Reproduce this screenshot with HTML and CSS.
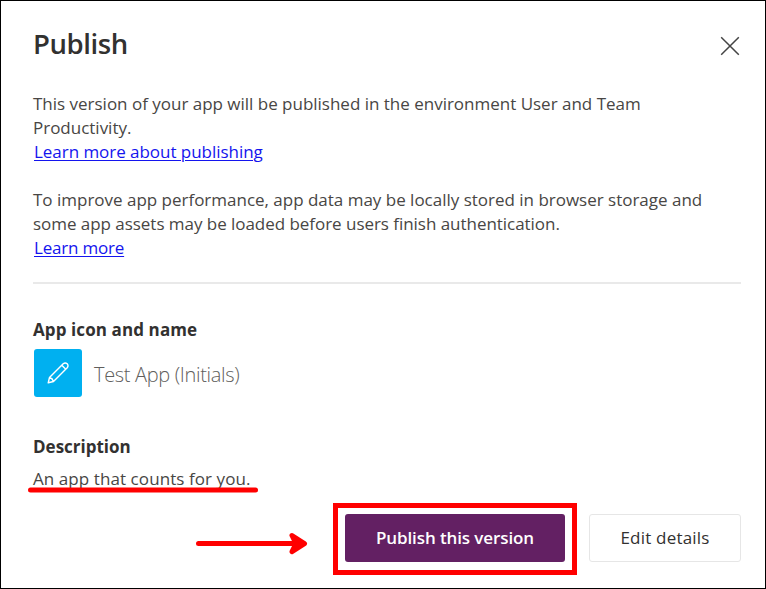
FILE: index.html
```html
<!DOCTYPE html>
<html lang="en">
<head>
<meta charset="utf-8">
<title>Publish</title>
<link rel="stylesheet" href="styles.css">
</head>
<body>
<main class="dialog">
  <header class="header">
    <h1 class="title">Publish</h1>
    <svg class="close" viewBox="0 0 20 20"><path d="M1.2 1.2 L18.8 18.8 M18.8 1.2 L1.2 18.8"/></svg>
  </header>
  <p class="copy">This version of your app will be published in the environment User and Team<br>Productivity.<br><a class="link" href="#">Learn more about publishing</a></p>
  <p class="copy">To improve app performance, app data may be locally stored in browser storage and<br><span class="tight">some app assets may be loaded before users finish authentication.</span><br><a class="link short" href="#">Learn more</a></p>
  <hr class="rule">
  <h2 class="label first">App icon and name</h2>
  <div class="app">
    <div class="tile">
      <svg class="pencil" viewBox="0 0 22 22"><path d="M1.2 20.8 L2.5 15.5 L16.2 1.8 Q18.2 .2 20.2 1.8 Q21.8 3.8 20.2 5.8 L6.5 19.5 Z M14.8 3.2 L18.8 7.2 M2.5 15.5 Q5.6 16.4 6.5 19.5"/></svg>
    </div>
    <span class="name">Test App (Initials)</span>
  </div>
  <h2 class="label second">Description</h2>
  <p class="description">An app that counts for you.<svg class="underline" viewBox="0 0 230 6"><path d="M2.5 3 H227.5"/></svg></p>
  <footer class="actions">
    <svg class="arrow" viewBox="0 0 112 24"><path d="M2.5 12.6 H104"/><path class="head" d="M96 4.5 L108.5 12.6 L96 20.7 L100 12.6 Z"/></svg>
    <div class="highlight"><button class="button primary">Publish this version</button></div>
    <button class="button secondary">Edit details</button>
  </footer>
</main>
</body>
</html>
```
FILE: styles.css
```css
* { box-sizing: border-box; }
body { margin: 0; background: #fff; }
.dialog {
  width: 766px; height: 589px; border: 1px solid #000;
  padding: 25px 24px 0 32px; overflow: hidden;
  font: 400 17px/24px "Open Sans", "Noto Sans", sans-serif; color: #484644;
  white-space: nowrap;
}
.header { display: flex; justify-content: space-between; height: 66px; }
.title { margin: 0; font-size: 27.5px; line-height: 36px; font-weight: 600; color: #323130; letter-spacing: -.4px; }
.close { width: 20px; height: 20px; margin: 10px 1px 0 0; fill: none; stroke: #444; stroke-width: 1.5; }
.copy { margin: 0 0 24px; letter-spacing: -.01px; }
.tight { letter-spacing: -.04px; }
.link { color: #1414ee; margin-left: 1px; letter-spacing: -.04px; text-underline-offset: 2px; text-decoration-thickness: 1px; }
.short { letter-spacing: -.2px; }
.rule { height: 2px; margin: -2px 0 34px; border: 0; background: #e9e9e9; }
.label { margin: 0; font-size: 17px; line-height: 24px; font-weight: 700; color: #323130; }
.first { letter-spacing: .1px; }
.app { display: flex; align-items: center; gap: 12px; height: 48px; margin: 7px 0 0 1px; }
.tile { display: grid; place-items: center; width: 48px; height: 48px; border-radius: 3px; background: #00b0f0; }
.pencil { width: 22px; height: 22px; fill: none; stroke: #fff; stroke-width: 1.4; stroke-linejoin: round; }
.name { font-size: 20px; line-height: 28px; font-weight: 300; color: #605e5c; margin-top: 3px; letter-spacing: -.33px; }
.second { margin-top: 38px; }
.description { position: relative; margin: 8px 0 0; height: 46px; letter-spacing: .08px; }
.underline { position: absolute; left: -5px; top: 20px; width: 230px; height: 6px; stroke: #f00; stroke-width: 5; stroke-linecap: round; }
.actions { display: flex; align-items: center; justify-content: flex-end; height: 72px; margin-top: -10px; }
.arrow { width: 112px; height: 24px; margin: 8px 25px 0 0; fill: none; stroke: #f00; stroke-width: 5; stroke-linecap: round; stroke-linejoin: round; }
.arrow .head { fill: #f00; }
.highlight { display: flex; justify-content: center; width: 244px; height: 72px; padding-top: 6px; border: 5px solid #f00; margin-right: 12px; }
.button { font: inherit; height: 48px; padding: 0; border-radius: 3px; }
.primary { width: 220px; border: 0; background: #632063; color: #fff; font-weight: 600; letter-spacing: -.1px; }
.secondary { width: 152px; margin-bottom: 2px; border: 1px solid #e6e6e6; background: #fff; color: #323130; font-weight: 500; letter-spacing: .2px; }
```
